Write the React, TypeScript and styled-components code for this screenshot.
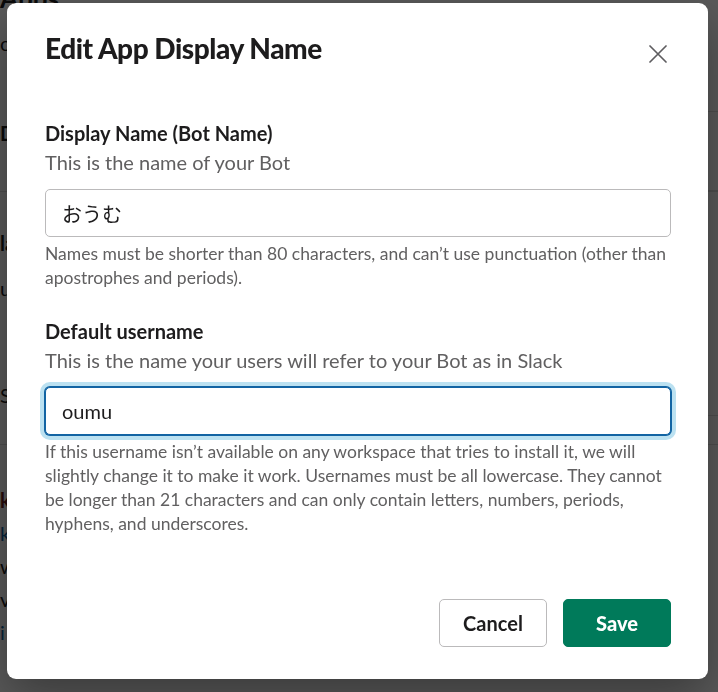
import React from "react";
import styled, { createGlobalStyle } from "styled-components";

const GlobalStyle = createGlobalStyle`
  html, body {
    margin: 0;
    padding: 0;
    width: 718px;
    height: 692px;
    overflow: hidden;
    background: #ffffff;
  }
  * { box-sizing: border-box; }
  body {
    font-family: Lato, "Noto Sans CJK JP", "Liberation Sans", sans-serif;
    color: #1d1c1d;
  }
`;

/* ---------- background page (dimmed behind the modal) ---------- */

const Page = styled.div`
  width: 718px;
  height: 692px;
  background: #ffffff;
  display: flex;
  flex-direction: column;
  overflow: hidden;
`;

const PageHeading = styled.div`
  height: 20px;
  font-size: 26px;
  font-weight: 700;
  line-height: 20px;
  margin-top: -12px;
  margin-bottom: 12px;
  color: #1d1c1d;
  white-space: nowrap;
`;

const PageRow = styled.div<{ $h: number; $line?: boolean }>`
  height: ${(p) => p.$h}px;
  flex: none;
  display: flex;
  align-items: stretch;
  justify-content: space-between;
  border-bottom: ${(p) => (p.$line ? "1px solid #dddddd" : "none")};
  font-size: 20px;
  white-space: nowrap;
`;

const LeftCell = styled.div`
  flex: 1;
  display: flex;
  align-items: center;
`;

const RightCell = styled.div<{ $line?: boolean }>`
  width: 60px;
  display: flex;
  align-items: center;
  justify-content: flex-start;
  padding-left: 2px;
  border-bottom: ${(p) => (p.$line ? "1px solid #dddddd" : "none")};
`;

const PageText = styled.span<{ $color?: string; $bold?: boolean }>`
  color: ${(p) => p.$color || "#1d1c1d"};
  font-weight: ${(p) => (p.$bold ? 700 : 400)};
`;

const Toggle = styled.span`
  width: 44px;
  height: 26px;
  border-radius: 13px;
  background: #1d1c1d;
`;

/* ---------- overlay & modal ---------- */

const Overlay = styled.div`
  position: fixed;
  inset: 0;
  background: rgba(0, 0, 0, 0.65);
  display: flex;
  align-items: flex-start;
  justify-content: flex-start;
  padding: 3px 0 0 7px;
`;

const Modal = styled.div`
  width: 701px;
  height: 676px;
  background: #ffffff;
  border-radius: 9px;
  display: flex;
  flex-direction: column;
  padding: 27px 37px 32px 38px;
  box-shadow: 0 18px 48px rgba(0, 0, 0, 0.35);
`;

const Header = styled.div`
  display: flex;
  align-items: flex-start;
  justify-content: space-between;
  margin-bottom: 47px;
`;

const Title = styled.h1`
  margin: 0;
  font-size: 28px;
  line-height: 36px;
  font-weight: 900;
  letter-spacing: -0.45px;
  color: #1d1c1d;
`;

const CloseButton = styled.button`
  width: 36px;
  height: 36px;
  border: none;
  background: transparent;
  padding: 0;
  margin-right: -4.5px;
  margin-top: 5.5px;
  display: flex;
  align-items: center;
  justify-content: center;
  color: #5e5d60;
  cursor: pointer;
`;

const Body = styled.div`
  flex: 1;
  display: flex;
  flex-direction: column;
`;

const Field = styled.div<{ $gap?: number }>`
  display: flex;
  flex-direction: column;
  margin-bottom: ${(p) => p.$gap ?? 0}px;
`;

const Label = styled.label`
  font-size: 20px;
  line-height: 29px;
  font-weight: 700;
  color: #1d1c1d;
`;

const Hint = styled.div`
  font-size: 20px;
  line-height: 29px;
  color: #616061;
`;

const Input = styled.input<{ $focused?: boolean }>`
  margin-top: ${(p) => (p.$focused ? 11.5 : 12.5)}px;
  width: 100%;
  height: 48px;
  border-radius: 5px;
  border: 1px solid ${(p) => (p.$focused ? "#1264a3" : "#bbbabb")};
  box-shadow: ${(p) =>
    p.$focused ? "0 0 0 1px #1264a3, 0 0 0 5px rgba(29, 155, 209, 0.3)" : "none"};
  padding: 0 16px;
  font-family: Lato, "Noto Sans CJK JP", sans-serif;
  font-size: 20px;
  color: #1d1c1d;
  background: #ffffff;
  outline: none;
`;

const Help = styled.div`
  margin-top: 5px;
  font-size: 17.5px;
  line-height: 24px;
  color: #616061;
`;

const Footer = styled.div`
  display: flex;
  justify-content: flex-end;
  gap: 16px;
`;

const Button = styled.button<{ $primary?: boolean }>`
  width: 108px;
  height: 48px;
  border-radius: 5px;
  font-family: Lato, sans-serif;
  font-size: 20px;
  font-weight: ${(p) => (p.$primary ? 900 : 700)};
  color: ${(p) => (p.$primary ? "#ffffff" : "#1d1c1d")};
  background: ${(p) => (p.$primary ? "#007a5a" : "#ffffff")};
  border: 1px solid ${(p) => (p.$primary ? "#007a5a" : "#bbbabb")};
  cursor: pointer;
`;

const CloseIcon = () => (
  <svg width="18" height="18" viewBox="0 0 18 18" fill="none">
    <path d="M1 1 L17 17 M17 1 L1 17" stroke="currentColor" strokeWidth="1.7" strokeLinecap="round" />
  </svg>
);

export default function App() {
  return (
    <>
      <GlobalStyle />
      <Page>
        <PageHeading>Apps</PageHeading>
        <PageRow $h={46}>
          <LeftCell><PageText>o</PageText></LeftCell>
          <RightCell />
        </PageRow>
        <PageRow $h={46}>
          <LeftCell />
          <RightCell $line />
        </PageRow>
        <PageRow $h={42}>
          <LeftCell><PageText $bold>D</PageText></LeftCell>
          <RightCell />
        </PageRow>
        <PageRow $h={38} $line>
          <LeftCell />
          <RightCell $line />
        </PageRow>
        <PageRow $h={34}>
          <LeftCell />
          <RightCell />
        </PageRow>
        <PageRow $h={34}>
          <LeftCell><PageText $bold>la</PageText></LeftCell>
          <RightCell />
        </PageRow>
        <PageRow $h={56}>
          <LeftCell><PageText>u</PageText></LeftCell>
          <RightCell />
        </PageRow>
        <PageRow $h={58}>
          <LeftCell />
          <RightCell />
        </PageRow>
        <PageRow $h={42}>
          <LeftCell><PageText>S</PageText></LeftCell>
          <RightCell $line><Toggle /></RightCell>
        </PageRow>
        <PageRow $h={29} $line>
          <LeftCell />
          <RightCell />
        </PageRow>
        <PageRow $h={39}>
          <LeftCell />
          <RightCell />
        </PageRow>
        <PageRow $h={32}>
          <LeftCell><PageText $bold $color="#6b1e1e">k</PageText></LeftCell>
          <RightCell />
        </PageRow>
        <PageRow $h={33}>
          <LeftCell><PageText $color="#1264a3">k</PageText></LeftCell>
          <RightCell><PageText>ns</PageText></RightCell>
        </PageRow>
        <PageRow $h={33}>
          <LeftCell><PageText>w</PageText></LeftCell>
          <RightCell />
        </PageRow>
        <PageRow $h={33}>
          <LeftCell><PageText>v</PageText></LeftCell>
          <RightCell><PageText $color="#1264a3">th</PageText></RightCell>
        </PageRow>
        <PageRow $h={33}>
          <LeftCell><PageText $color="#1264a3">i</PageText></LeftCell>
          <RightCell />
        </PageRow>
      </Page>
      <Overlay>
        <Modal role="dialog" aria-label="Edit App Display Name">
          <Header>
            <Title>Edit App Display Name</Title>
            <CloseButton aria-label="Close">
              <CloseIcon />
            </CloseButton>
          </Header>
          <Body>
            <Field $gap={27}>
              <Label>Display Name (Bot Name)</Label>
              <Hint>This is the name of your Bot</Hint>
              <Input defaultValue="おうむ" />
              <Help>
                Names must be shorter than 80 characters, and can’t use punctuation (other than
                apostrophes and periods).
              </Help>
            </Field>
            <Field>
              <Label>Default username</Label>
              <Hint>This is the name your users will refer to your Bot as in Slack</Hint>
              <Input defaultValue="oumu" $focused />
              <Help>
                If this username isn’t available on any workspace that tries to install it, we will
                slightly change it to make it work. Usernames must be all lowercase. They cannot be
                longer than 21 characters and can only contain letters, numbers, periods, hyphens,
                and underscores.
              </Help>
            </Field>
          </Body>
          <Footer>
            <Button>Cancel</Button>
            <Button $primary>Save</Button>
          </Footer>
        </Modal>
      </Overlay>
    </>
  );
}
